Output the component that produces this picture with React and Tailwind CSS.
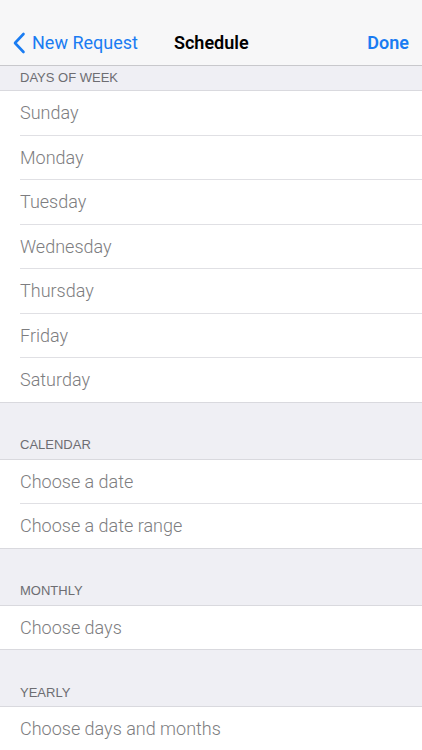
import React from 'react';

const sections = [
  { title: 'CALENDAR', rows: ['Choose a date', 'Choose a date range'] },
  { title: 'MONTHLY', rows: ['Choose days'] },
  { title: 'YEARLY', rows: ['Choose days and months'] },
];

const days = ['Sunday', 'Monday', 'Tuesday', 'Wednesday', 'Thursday', 'Friday', 'Saturday'];

const headerFont = { fontFamily: '"Liberation Sans", Arial, sans-serif' };

function Rows({ items }) {
  return (
    <div className="bg-white border-t border-[#d9d9de]">
      {items.map((label, i) => {
        const last = i === items.length - 1;
        return (
          <div key={label} className={`h-[44.5px] pl-5 ${last ? 'border-b border-[#d9d9de]' : ''}`}>
            <div
              className={`h-full flex items-center text-[18px] font-light text-[#7d7d80] ${
                last ? '' : 'border-b border-[#e0e0e4]'
              }`}
            >
              {label}
            </div>
          </div>
        );
      })}
    </div>
  );
}

export default function App() {
  return (
    <div className="w-[422px] h-[750px] overflow-hidden bg-[#efeff4]" style={{ fontFamily: 'Roboto, "Liberation Sans", sans-serif' }}>
      {/* Nav bar */}
      <div className="h-[66px] bg-[#f7f7f8] border-b border-[#c8c8cc] flex items-end pb-[9px] px-3 relative">
        <div className="flex items-center text-[#1a7cf2] text-[18px] gap-[6px]">
          <svg width="14" height="22" viewBox="0 0 14 22" fill="none">
            <path d="M11.5 2 L3 11 L11.5 20" stroke="#1a7cf2" strokeWidth="2.6" strokeLinecap="round" strokeLinejoin="round" />
          </svg>
          <span>New Request</span>
        </div>
        <div className="absolute left-[174px] bottom-[9px] text-[18px] font-semibold text-black">Schedule</div>
        <div className="ml-auto text-[18px] font-semibold text-[#1a7cf2] pr-[1px]">Done</div>
      </div>

      {/* Days of week */}
      <div className="h-[24px] pl-5 pb-[1px] flex items-center text-[13px] text-[#6d6d72]" style={headerFont}>DAYS OF WEEK</div>
      <Rows items={days} />

      {sections.map((s) => (
        <div key={s.title}>
          <div className="h-[56px] pl-5 pb-[4px] flex items-end text-[13px] text-[#6d6d72]" style={headerFont}>{s.title}</div>
          <Rows items={s.rows} />
        </div>
      ))}
    </div>
  );
}
